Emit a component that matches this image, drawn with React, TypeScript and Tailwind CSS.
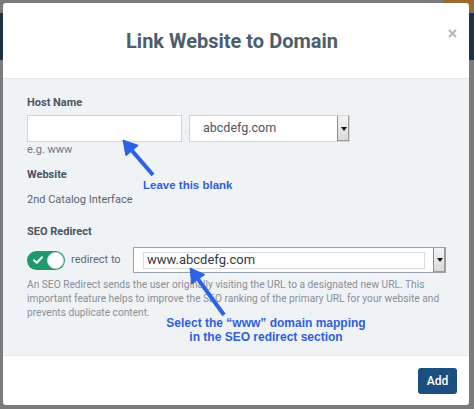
import React from 'react'

function SelectArrow() {
  return (
    <div className="flex h-full w-[12px] shrink-0 items-center justify-center border-l border-[#8d8d8d] bg-gradient-to-b from-[#f4f4f4] to-[#d9d9d9] shadow-[inset_-1px_-1px_0_#9a9a9a]">
      <span className="h-0 w-0 border-x-[3px] border-t-[4px] border-x-transparent border-t-[#111]" />
    </div>
  )
}

function Toggle() {
  return (
    <div className="flex h-[19px] w-[38px] shrink-0 items-center justify-between rounded-full bg-[#1f9a6d] pl-[6px] pr-[1px]">
      <svg width="10" height="8" viewBox="0 0 10 8" fill="none">
        <path d="M1 4.2 3.8 6.8 9 1.2" stroke="#fff" strokeWidth="2" strokeLinecap="round" strokeLinejoin="round" />
      </svg>
      <span className="h-[17px] w-[17px] rounded-full border border-[#d7dde2] bg-white" />
    </div>
  )
}

export default function App() {
  return (
    <div className="relative h-[409px] w-[474px] overflow-hidden bg-[#7b7b7b] font-['Roboto','Liberation_Sans',sans-serif]">
      {/* dimmed page behind the modal */}
      <div className="absolute left-0 right-0 top-[13px] h-[47px] bg-[#1d3045]" />
      <div className="absolute right-0 top-0 h-[12px] w-[31px] bg-[#9a6b2e]" />

      {/* modal */}
      <div className="absolute left-[3px] top-[3px] flex h-[402px] w-[466px] flex-col overflow-hidden rounded-[3px] bg-white">
        <div className="relative flex h-[76px] items-center justify-center border-b border-[#e2e7ec] pr-[8px]">
          <h2 className="text-[20px] font-bold text-[#4e5d6c]">Link Website to Domain</h2>
          <svg className="absolute right-[12px] top-[26px]" width="9" height="9" viewBox="0 0 9 9">
            <path d="M1 1 8 8M8 1 1 8" stroke="#b3b3b3" strokeWidth="1.8" />
          </svg>
        </div>

        <div className="flex-1 bg-[#f0f3f6] px-[24px] pt-[17px]">
          <div className="text-[11px] font-bold leading-[14px] text-[#4a5561]">Host Name</div>
          <div className="mt-[5px] flex h-[27px] items-center">
            <div className="h-full w-[155px] border border-[#cfd4d9] bg-white" />
            <div className="flex w-[7px] justify-center pt-[3px] text-[8px] text-[#9aa2aa]">.</div>
            <div className="flex h-full w-[161px] items-center border border-[#d0d5da] bg-white">
              <span className="flex-1 pl-[13px] text-[12.5px] text-[#4a5561]">abcdefg.com</span>
              <SelectArrow />
            </div>
          </div>
          <div className="mt-[1px] text-[11px] leading-[14px] text-[#6f7881]">e.g. www</div>

          <div className="mt-[11px] text-[11px] font-bold leading-[14px] text-[#4a5561]">Website</div>
          <div className="mt-[11px] text-[11px] leading-[14px] text-[#5b6670]">2nd Catalog Interface</div>

          <div className="mt-[18px] text-[11px] font-bold leading-[14px] text-[#4a5561]">SEO Redirect</div>
          <div className="mt-[8px] flex h-[26px] items-center">
            <Toggle />
            <span className="ml-[6px] w-[46px] shrink-0 whitespace-nowrap text-[11px] text-[#5f6b76]">redirect to</span>
            <div className="ml-[16px] flex h-full w-[313px] shrink-0 items-center border border-[#98a2ad] bg-white">
              <div className="ml-[9px] flex h-[17px] w-[282px] items-center border border-[#d9dde1] pl-[3px] text-[13px] text-[#333a41]">
                www.abcdefg.com
              </div>
              <div className="flex-1" />
              <SelectArrow />
            </div>
          </div>
          <p className="mt-[5px] whitespace-nowrap text-[10.2px] leading-[14px] text-[#878f97]">
            An SEO Redirect sends the user originally visiting the URL to a designated new URL. This
            <br />
            important feature helps to improve the SEO ranking of the primary URL for your website and
            <br />
            prevents duplicate content.
          </p>
        </div>

        <div className="flex h-[50px] items-start justify-end border-t border-[#e2e7ec] pr-[12px] pt-[12px]">
          <button className="h-[26px] w-[39px] rounded-[3px] bg-[#1b4f7d] text-[12px] font-medium text-white">
            Add
          </button>
        </div>
      </div>

      {/* callouts drawn over the form */}
      <svg className="pointer-events-none absolute left-0 top-0" width="474" height="409">
        <g fill="#2c63e6" stroke="#2c63e6" strokeLinejoin="round">
          <line x1="153" y1="175" x2="132" y2="150.6" strokeWidth="4" />
          <polygon points="123,140 138.2,145.4 126,155.8" strokeWidth="1" />
          <line x1="224" y1="315" x2="198.2" y2="279.3" strokeWidth="4" />
          <polygon points="190,268 204.7,274.6 191.7,284" strokeWidth="1" />
        </g>
      </svg>
      <div className="absolute left-[143px] top-[178px] font-['Liberation_Sans',Arial,sans-serif] text-[11.5px] font-bold leading-[14px] text-[#2f5fdc]">
        Leave this blank
      </div>
      <div className="absolute left-[166px] top-[316px] w-[200px] text-center font-['Liberation_Sans',Arial,sans-serif] text-[12px] font-bold leading-[14px] text-[#2f5fdc]">
        Select the “www” domain mapping
        <br />
        in the SEO redirect section
      </div>
    </div>
  )
}
